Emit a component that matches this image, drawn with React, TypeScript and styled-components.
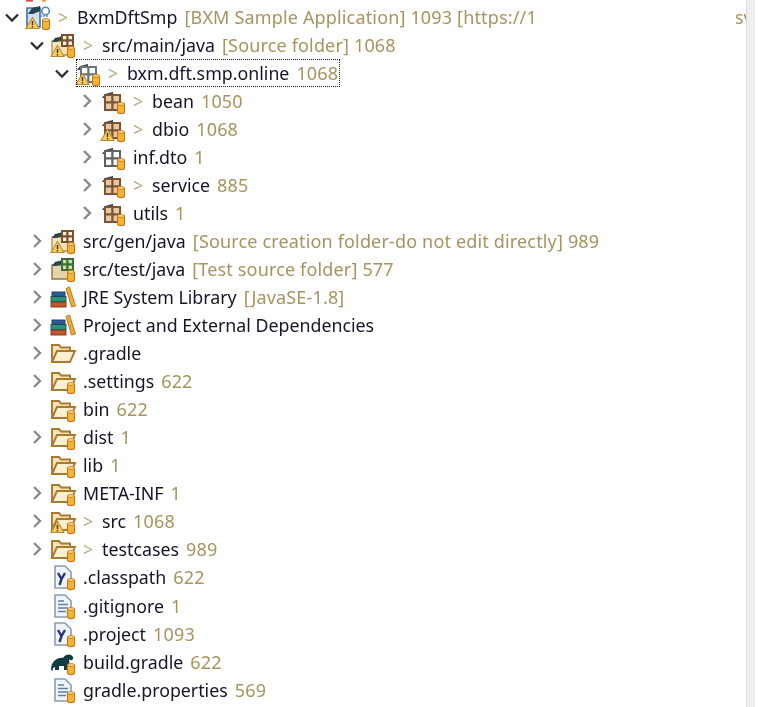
import React from "react";
import styled, { createGlobalStyle } from "styled-components";

const Global = createGlobalStyle`
  html, body { margin: 0; padding: 0; background: #fff; }
  #root { width: 762px; height: 707px; overflow: hidden; }
`;

const Window = styled.div`
  display: flex;
  width: 762px;
  height: 707px;
  background: #fff;
  overflow: hidden;
`;

const TreePane = styled.div`
  width: 746px;
  height: 707px;
  padding-top: 2.5px;
  box-sizing: border-box;
  overflow: hidden;
  font-family: "Noto Sans", "Open Sans", sans-serif;
  font-size: 17.8px;
  color: #14142a;
  filter: blur(0.35px);
`;

const Scrollbar = styled.div`
  width: 9px;
  height: 707px;
  background: #eeeeee;
  border-left: 1px solid #dedede;
  box-sizing: border-box;
`;

const RowLine = styled.div<{ $depth: number }>`
  display: flex;
  align-items: center;
  height: 28.06px;
  padding-left: ${(p) => p.$depth * 25}px;
  white-space: nowrap;
`;

const Twisty = styled.div`
  flex: none;
  width: 24px;
  height: 28px;
  margin-right: 2px;
  display: flex;
  align-items: center;
  justify-content: center;
`;

const Item = styled.div<{ $focused?: boolean }>`
  display: flex;
  align-items: center;
  height: 28px;
  box-sizing: border-box;
  padding-right: 2px;
  outline: ${(p) => (p.$focused ? "1.5px dotted #222" : "none")};
  outline-offset: -1px;
`;

const IconBox = styled.svg`
  flex: none;
  width: 24px;
  height: 24px;
  overflow: visible;
  display: block;
`;

const Label = styled.span`
  margin-left: 8px;
  line-height: 28px;
`;

const Prefix = styled.span`
  display: inline-block;
  width: 19px;
  color: #b8a67c;
`;

const Deco = styled.span`
  color: #a8935f;
  margin-left: 7px;
  font-size: 18px;
  letter-spacing: 0.16px;
`;

const Tail = styled.span`
  color: #a8935f;
  margin-left: 198px;
`;

const Chevron = ({ open }: { open: boolean }) =>
  open ? (
    <svg width="16" height="16" viewBox="0 0 16 16">
      <path d="M2 5.5 L8 11.5 L14 5.5" fill="none" stroke="#2c3034" strokeWidth="2.3" />
    </svg>
  ) : (
    <svg width="16" height="16" viewBox="0 0 16 16">
      <path d="M5 2 L11 8 L5 14" fill="none" stroke="#8a8a8a" strokeWidth="2.4" />
    </svg>
  );

const Repo = () => (
  <g>
    <path d="M16.5 15 h7 v8 a3.5 1.6 0 0 1 -7 0 z" fill="#f2b632" stroke="#c8741a" strokeWidth="1.1" />
    <ellipse cx="20" cy="15" rx="3.5" ry="1.4" fill="#fbe08a" stroke="#c8741a" strokeWidth="0.9" />
  </g>
);

const Warn = () => (
  <g>
    <path d="M6.5 12.5 L13 23.5 H0 Z" fill="#f6cf63" stroke="#b98a2c" strokeWidth="1.1" />
    <path d="M6.5 16 V20 M6.5 21 V22.6" stroke="#4a3410" strokeWidth="1.5" />
  </g>
);

const Flag = () => <path d="M1 9 L4 5 L12 3 V7 L5 9 Z" fill="#2a454f" />;

const Grid = ({ x, y, s, stroke, fill }: { x: number; y: number; s: number; stroke: string; fill: string }) => (
  <g stroke={stroke} strokeWidth="2" fill={fill}>
    <rect x={x} y={y} width={s} height={s} />
    <rect x={x + s} y={y} width={s} height={s} />
    <rect x={x} y={y + s} width={s} height={s} />
    <rect x={x + s} y={y + s} width={s} height={s} />
  </g>
);

type IconKind =
  | "project" | "srcMain" | "pkgFocus" | "pkg" | "pkgWarn" | "pkgEmpty" | "srcGen" | "srcTest"
  | "lib" | "folderOpen" | "folder" | "folderWarn" | "yfile" | "doc" | "gradle";

const Folder = () => (
  <g>
    <path d="M1 21 V4 H8 L10 6.5 H19 V10" fill="#f4e2b4" stroke="#a9792f" strokeWidth="1.9" />
    <path d="M1 21 L6 10 H24 L19 21 Z" fill="#fbefcf" stroke="#a9792f" strokeWidth="1.9" />
  </g>
);

const Doc = ({ children }: { children?: React.ReactNode }) => (
  <g>
    <path d="M4 1 H14 L20 7 V23 H4 Z" fill="#f1f4fa" stroke="#8b9bb5" strokeWidth="1.6" />
    {children}
  </g>
);

const Icon = ({ kind }: { kind: IconKind }) => {
  let body: React.ReactNode = null;
  switch (kind) {
    case "project":
      body = (
        <>
          <rect x="0" y="-5" width="7" height="1.6" fill="#d84a3a" />
          <rect x="16" y="-5" width="4" height="1.6" fill="#e39a33" />
          <path d="M1 22 V3 H14 V22 Z" fill="#cfe0f2" stroke="#3f6fb0" strokeWidth="1.6" />
          <path d="M2 9 L6 3 L14 1 V6 L7 9 Z" fill="#2a454f" />
          <circle cx="19.5" cy="6" r="3.8" fill="#fff" stroke="#4f8fc4" strokeWidth="1.6" />
          <path d="M14 11 H23" stroke="#4f8fc4" strokeWidth="1.4" strokeDasharray="2 1" />
          <Warn />
          <Repo />
        </>
      );
      break;
    case "srcMain":
    case "srcGen":
      body = (
        <>
          <path d="M1 22 V8 H21 V22 Z" fill="#f3e3bd" stroke="#b2904f" strokeWidth="1.3" />
          <Flag />
          <Grid x={11} y={2} s={5.5} stroke="#7a4f2c" fill="#fbf4e2" />
          <Warn />
          <Repo />
        </>
      );
      break;
    case "srcTest":
      body = (
        <>
          <path d="M1 22 V8 H21 V22 Z" fill="#e3d5ab" stroke="#8c7a4a" strokeWidth="1.5" />
          <Flag />
          <Grid x={11} y={2} s={5.5} stroke="#3f6b34" fill="#c9e0a8" />
          <Repo />
        </>
      );
      break;
    case "pkgFocus":
      body = (
        <>
          <Flag />
          <Grid x={5} y={6} s={7.5} stroke="#6c7278" fill="#fff" />
          <Warn />
          <Repo />
        </>
      );
      break;
    case "pkg":
    case "pkgWarn":
      body = (
        <>
          <Flag />
          <Grid x={4} y={6} s={7.5} stroke="#7a5436" fill="#e6c9a0" />
          {kind === "pkgWarn" && <Warn />}
          <Repo />
        </>
      );
      break;
    case "pkgEmpty":
      body = (
        <>
          <Flag />
          <Grid x={4} y={6} s={7.5} stroke="#5d6266" fill="#fff" />
          <Repo />
        </>
      );
      break;
    case "lib":
      body = (
        <>
          <rect x="0" y="17" width="15" height="5" fill="#c2562c" stroke="#7e3218" strokeWidth="0.9" />
          <rect x="0" y="11.5" width="15" height="5" fill="#2f8f78" stroke="#1d5a4c" strokeWidth="0.9" />
          <rect x="1" y="7" width="13" height="4.2" fill="#2b5f93" stroke="#193a5c" strokeWidth="0.9" />
          <path d="M15 3.5 L18.5 2 L24.5 21 L20.5 22 Z" fill="#eda93a" stroke="#b2741c" strokeWidth="0.9" />
        </>
      );
      break;
    case "folderOpen":
      body = <Folder />;
      break;
    case "folder":
      body = (
        <>
          <Folder />
          <Repo />
        </>
      );
      break;
    case "folderWarn":
      body = (
        <>
          <Folder />
          <Warn />
          <Repo />
        </>
      );
      break;
    case "yfile":
      body = (
        <>
          <Doc>
            <path d="M7 8 L10.5 14 L14 8 M10.5 14 L8.5 20" fill="none" stroke="#26337d" strokeWidth="2.4" />
          </Doc>
          <Repo />
        </>
      );
      break;
    case "doc":
      body = (
        <>
          <Doc>
            <path d="M7 7 H13 M7 10.5 H17 M7 14 H17 M7 17.5 H15" stroke="#5d7fb0" strokeWidth="1.6" />
          </Doc>
          <Repo />
        </>
      );
      break;
    case "gradle":
      body = (
        <>
          <path d="M0 20 C0 11 7 7 12 8 C14 4 20 3 22 7 C23 10 20 11 18 9.5 C19 14 18 17 17 20 H13 V16 H8 V20 H4 V17 C3 17 1.5 18 1.5 21 Z" fill="#133a45" />
          <Repo />
        </>
      );
      break;
  }
  return <IconBox viewBox="0 0 24 24">{body}</IconBox>;
};

type Node = {
  name: string;
  icon: IconKind;
  depth: number;
  twist?: "open" | "closed";
  prefix?: boolean;
  deco?: string;
  focused?: boolean;
  tail?: string;
};

const nodes: Node[] = [
  { name: "BxmDftSmp", icon: "project", depth: 0, twist: "open", prefix: true, deco: "[BXM Sample Application] 1093 [https://1", tail: "sv" },
  { name: "src/main/java", icon: "srcMain", depth: 1, twist: "open", prefix: true, deco: "[Source folder] 1068" },
  { name: "bxm.dft.smp.online", icon: "pkgFocus", depth: 2, twist: "open", prefix: true, deco: "1068", focused: true },
  { name: "bean", icon: "pkg", depth: 3, twist: "closed", prefix: true, deco: "1050" },
  { name: "dbio", icon: "pkgWarn", depth: 3, twist: "closed", prefix: true, deco: "1068" },
  { name: "inf.dto", icon: "pkgEmpty", depth: 3, twist: "closed", deco: "1" },
  { name: "service", icon: "pkg", depth: 3, twist: "closed", prefix: true, deco: "885" },
  { name: "utils", icon: "pkg", depth: 3, twist: "closed", deco: "1" },
  { name: "src/gen/java", icon: "srcGen", depth: 1, twist: "closed", deco: "[Source creation folder-do not edit directly] 989" },
  { name: "src/test/java", icon: "srcTest", depth: 1, twist: "closed", deco: "[Test source folder] 577" },
  { name: "JRE System Library", icon: "lib", depth: 1, twist: "closed", deco: "[JavaSE-1.8]" },
  { name: "Project and External Dependencies", icon: "lib", depth: 1, twist: "closed" },
  { name: ".gradle", icon: "folderOpen", depth: 1, twist: "closed" },
  { name: ".settings", icon: "folder", depth: 1, twist: "closed", deco: "622" },
  { name: "bin", icon: "folder", depth: 1, deco: "622" },
  { name: "dist", icon: "folder", depth: 1, twist: "closed", deco: "1" },
  { name: "lib", icon: "folder", depth: 1, deco: "1" },
  { name: "META-INF", icon: "folder", depth: 1, twist: "closed", deco: "1" },
  { name: "src", icon: "folderWarn", depth: 1, twist: "closed", prefix: true, deco: "1068" },
  { name: "testcases", icon: "folder", depth: 1, twist: "closed", prefix: true, deco: "989" },
  { name: ".classpath", icon: "yfile", depth: 1, deco: "622" },
  { name: ".gitignore", icon: "doc", depth: 1, deco: "1" },
  { name: ".project", icon: "yfile", depth: 1, deco: "1093" },
  { name: "build.gradle", icon: "gradle", depth: 1, deco: "622" },
  { name: "gradle.properties", icon: "doc", depth: 1, deco: "569" },
];

export default function App() {
  return (
    <>
      <Global />
      <Window>
        <TreePane>
          {nodes.map((n) => (
            <RowLine key={n.name + n.depth} $depth={n.depth}>
              <Twisty>{n.twist && <Chevron open={n.twist === "open"} />}</Twisty>
              <Item $focused={n.focused}>
                <Icon kind={n.icon} />
                <Label>
                  {n.prefix && <Prefix>&gt;</Prefix>}
                  {n.name}
                  {n.deco && <Deco>{n.deco}</Deco>}
                  {n.tail && <Tail>{n.tail}</Tail>}
                </Label>
              </Item>
            </RowLine>
          ))}
        </TreePane>
        <Scrollbar />
      </Window>
    </>
  );
}
